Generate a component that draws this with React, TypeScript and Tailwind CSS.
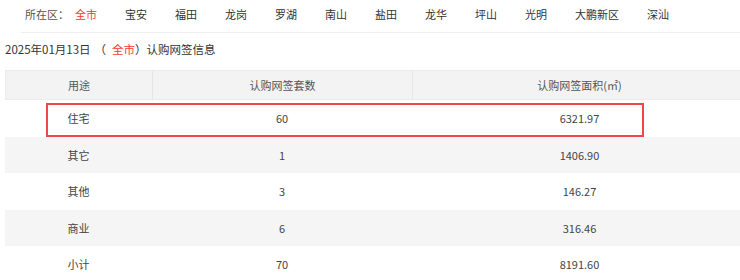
const districts = ["全市", "宝安", "福田", "龙岗", "罗湖", "南山", "盐田", "龙华", "坪山", "光明", "大鹏新区", "深汕"];

const rows = [
  { use: "住宅", count: "60", area: "6321.97" },
  { use: "其它", count: "1", area: "1406.90" },
  { use: "其他", count: "3", area: "146.27" },
  { use: "商业", count: "6", area: "316.46" },
  { use: "小计", count: "70", area: "8191.60" },
];

export default function App() {
  return (
    <div
      className="relative w-[740px] h-[280px] overflow-hidden bg-white text-[11px] text-[#333]"
      style={{ fontFamily: '"Noto Sans CJK SC", "Noto Sans", sans-serif' }}
    >
      {/* District filter */}
      <div className="ml-[21px] h-[33px] pb-[3px] flex items-center border-b border-[#eeeeee] pl-[4px] whitespace-nowrap">
        <span className="text-[#555] w-[50px] shrink-0">所在区：</span>
        {districts.map((d, i) => (
          <span key={d} className={`shrink-0 mr-[28px] ${i === 0 ? "text-[#ff3333]" : "text-[#333]"}`}>
            {d}
          </span>
        ))}
      </div>

      {/* Title */}
      <div className="pl-[5px] h-[34px] flex items-center text-[11.5px] text-[#333] whitespace-nowrap">
        <span>2025年01月13日</span>
        <span className="ml-[4px]">
          （<span className="ml-[6px] text-[#ff3333]">全市</span>）认购网签信息
        </span>
      </div>

      {/* Table */}
      <div className="ml-[5px] mt-[3px] w-[742px]">
        <div className="flex h-[30px] bg-[#f3f3f3] border border-[#ebebeb] text-[#555]">
          <div className="w-[147px] flex items-center justify-center border-r border-[#e6e6e6]">用途</div>
          <div className="w-[260px] flex items-center justify-center border-r border-[#e6e6e6]">认购网签套数</div>
          <div className="flex-1 flex items-center justify-center">认购网签面积(㎡)</div>
        </div>
        {rows.map((r, i) => (
          <div key={r.use} className={`flex h-[36.5px] text-[#444] ${i % 2 === 1 ? "bg-[#f5f5f5]" : "bg-white"}`}>
            <div className="w-[147px] flex items-center justify-center">{r.use}</div>
            <div className="w-[260px] flex items-center justify-center">{r.count}</div>
            <div className="flex-1 flex items-center justify-center">{r.area}</div>
          </div>
        ))}
      </div>

      {/* Highlight annotation */}
      <div className="absolute left-[46px] top-[103px] w-[598px] h-[34px] border-2 border-[#f0474a] pointer-events-none" />
    </div>
  );
}
